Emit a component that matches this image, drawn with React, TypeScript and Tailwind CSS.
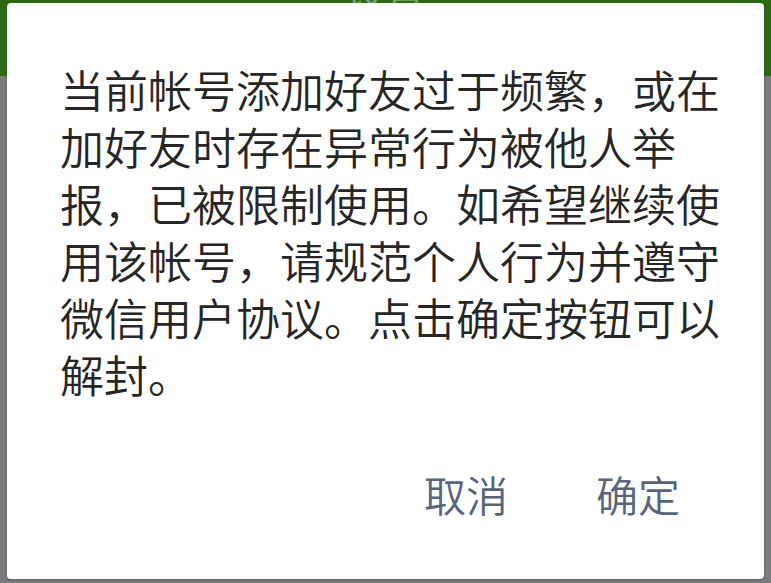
import React from 'react';

const App: React.FC = () => {
  return (
    <div className="relative w-[771px] h-[583px] overflow-hidden bg-[#7b7b7f] font-['Noto_Sans_CJK_SC','Noto_Sans',sans-serif]">
      {/* green title bar behind the dim layer */}
      <div className="h-[76px] bg-[#2e6a16] flex justify-center">
        <span className="text-[40px] leading-none -mt-[30px] text-white/40">设置</span>
      </div>

      {/* dialog */}
      <div className="absolute left-[7px] top-[3px] w-[757px] h-[576px] bg-white rounded-[4px] shadow-[0_1px_3px_rgba(0,0,0,0.25)] flex flex-col">
        <p className="pl-[53px] pt-[58px] w-[725px] text-[44px] leading-[57px] font-[350] text-[#262626]">
          当前帐号添加好友过于频繁，或在加好友时存在异常行为被他人举报，已被限制使用。如希望继续使用该帐号，请规范个人行为并遵守微信用户协议。点击确定按钮可以解封。
        </p>
        <div className="mt-auto mb-[60px] flex justify-end pr-[84px] gap-[88px] text-[42px] leading-[50px] font-[350] text-[#56657c]">
          <span>取消</span>
          <span>确定</span>
        </div>
      </div>
    </div>
  );
};

export default App;
